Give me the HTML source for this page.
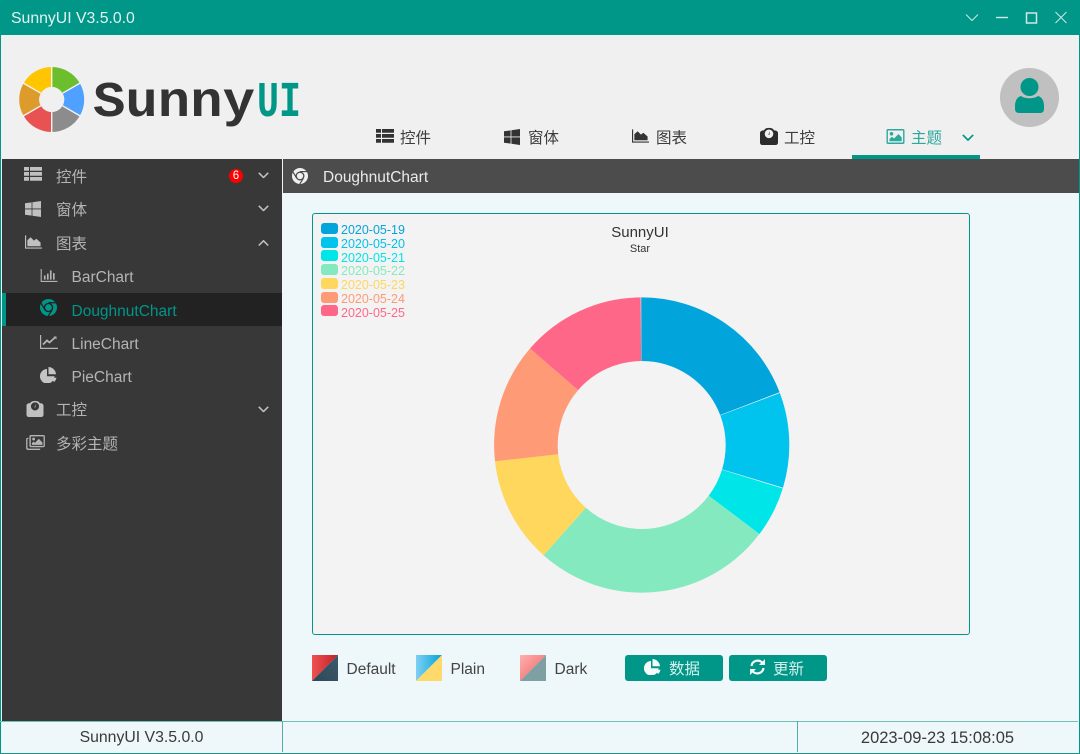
<!DOCTYPE html>
<html lang="zh"><head><meta charset="utf-8"><title>SunnyUI</title>
<style>
html,body{margin:0;padding:0}
body{width:1080px;height:754px;position:relative;overflow:hidden;background:#eef7f9;font-family:"Liberation Sans","Noto Sans CJK SC",sans-serif;color:#333}
.a{position:absolute}
.t{position:absolute;white-space:nowrap;line-height:20px;height:20px}
svg.i{position:absolute;overflow:visible}
.side{color:#b4b4b4;font-size:15.500px}
.tab{color:#3c3c3c;font-size:15.500px}
.leg{position:absolute;left:321px;width:17px;height:11px;border-radius:3px}
.lt{position:absolute;left:341px;font-size:12.500px;line-height:14px;white-space:nowrap}
.sw{position:absolute;top:655px;width:26px;height:26px}
.btn{position:absolute;top:655px;height:26px;width:98px;background:#009688;border-radius:3px}
</style></head><body>
<svg width="0" height="0" style="position:absolute">
<defs>
<symbol id="list" viewBox="0 0 18 14"><path d="M0 0h5v3.800H0zM0 5h5v3.800H0zM0 10h5v3.800H0zM6 0h12v3.800H6zM6 5h12v3.800H6zM6 10h12v3.800H6z"/></symbol>
<symbol id="win" viewBox="0 0 16 16"><path d="M0 2.300 6.600 1.400V7.500H0zM7.400 1.300 16 0V7.500H7.400zM0 8.400H6.600V14.600L0 13.700zM7.400 8.400H16V16L7.400 14.800z"/></symbol>
<symbol id="area" viewBox="0 0 18 14"><path d="M0 0h1.200v12.800H18V14H0z"/><path d="M2.500 11.500V5L6 2l3.500 3.500L12 3.500l4.500 4v4z"/></symbol>
<symbol id="scale" viewBox="0 0 18 18"><path fill-rule="evenodd" d="M3 3.500C4 3.500 4.500 2.500 5 2 6.500 .5 11.500 .5 13 2 13.500 2.500 14 3.500 15 3.500 16.500 3.500 18 4.500 18 6V15.500C18 17 17 18 15.500 18H2.500C1 18 0 17 0 15.500V6C0 4.500 1.500 3.500 3 3.500ZM9 2.500A4.300 4.300 0 1 0 9 11.100 4.300 4.300 0 1 0 9 2.500Z"/><path d="M9.800 4 9.400 8 8.400 7.800z"/></symbol>
<symbol id="img" viewBox="0 0 18 15"><path fill-rule="evenodd" d="M0 1.500C0 .6.600 0 1.500 0h15c.9 0 1.500.6 1.500 1.500v12c0 .9-.6 1.500-1.500 1.500h-15C.6 15 0 14.400 0 13.500zM1.400 1.500V13.500H16.600V1.500z"/><circle cx="5" cy="4.800" r="1.800"/><path d="M3 12.300V10L5.500 7.800 7.500 9.500 12 5 15.200 8.500V12.300z"/></symbol>
<symbol id="bar" viewBox="0 0 18 14"><path d="M0 0h1.200v12.800H18V14H0zM3.500 7h1.800v4.500H3.500zM6.800 5h1.800v6.500H6.800zM10 1.500h1.800v10H10zM13.300 4.500h1.800v7h-1.800z"/></symbol>
<symbol id="line" viewBox="0 0 18 14"><path d="M0 0h1.200v12.800H18V14H0z"/><path d="M3 9.500 7 5.500 9.500 7.500 15 2.500" fill="none" stroke="currentColor" stroke-width="1.800"/><path d="M13.500 1.500h3v3z"/></symbol>
<symbol id="pie" viewBox="0 0 17 16"><path d="M7 2V9.300H14.500A7.300 7.300 0 1 1 7 2Z"/><path d="M8.500 0A7.800 7.800 0 0 1 16 7.300H8.500Z"/><path d="M9.500 10.700H16.500A7.500 7.500 0 0 1 14.200 15Z"/></symbol>
<symbol id="chrome" viewBox="0 0 18 18"><circle cx="9" cy="9" r="9"/><circle cx="9" cy="9" r="4.300" stroke="var(--bg)" stroke-width="1.500"/><path d="M9 4H17.500M5.200 11.500 1 4.300M12.800 11.500 8.500 18.500" fill="none" stroke="var(--bg)" stroke-width="1.300"/></symbol>
<symbol id="imgs" viewBox="0 0 20 16"><path d="M0 4.500C0 3.500.6 3 1.500 3H2.500V4.300H1.400V13.500C1.400 14 1.700 14.500 2.500 14.500H15V16H2C.8 16 0 15 0 14z"/><path fill-rule="evenodd" d="M3.500 1.500C3.500.6 4.100 0 5 0H18.500C19.400 0 20 .6 20 1.500V11.500C20 12.400 19.400 13 18.500 13H5C4.100 13 3.500 12.400 3.500 11.500ZM5 1.400V11.600H18.600V1.400Z"/><circle cx="8" cy="4.300" r="1.500"/><path d="M6.200 10.500V8.500L8 7 9.500 8.200 13.500 4 17.400 8V10.500z"/></symbol>
<symbol id="chev" viewBox="0 0 14 8"><path d="M1 1 7 7 13 1" fill="none" stroke="currentColor" stroke-width="2"/></symbol>
<path id="sec" d="M0 -32.500A32.500 32.500 0 0 1 28.150 -16.250L10.900 -6.300A12.600 12.600 0 0 0 0 -12.600Z"/>
</defs></svg>

<!-- title bar -->
<div class="a" style="left:0;top:0;width:1080px;height:35px;background:#009688"></div>
<div class="t" style="left:11px;top:8.500px;color:#e3f3f1;font-size:15.800px">SunnyUI V3.5.0.0</div>
<svg class="i" style="left:960px;top:10px" width="115" height="16" fill="none" stroke="#cdeae6">
<path d="M6 4.500 12 10.500 18 4.500" stroke-width="1"/>
<path d="M36 7.500H48" stroke-width="1.400"/>
<rect x="66.500" y="3" width="10" height="10" stroke-width="1.500"/>
<path d="M95.500 2 106.500 13M106.500 2 95.500 13" stroke-width="1"/>
</svg>

<!-- header -->
<div class="a" style="left:1px;top:35px;width:1078px;height:124px;background:#f0f0f0"></div>
<div class="a" style="left:0;top:35px;width:1px;height:719px;background:#009688"></div>
<div class="a" style="left:1079px;top:35px;width:1px;height:719px;background:#009688"></div>

<!-- logo -->
<svg class="i" style="left:0;top:50px" width="310" height="90">
<use href="#sec" transform="translate(51.700 49.500)" fill="#6dbe2c"/>
<use href="#sec" transform="translate(51.700 49.500) rotate(60)" fill="#50a0ff"/>
<use href="#sec" transform="translate(51.700 49.500) rotate(120)" fill="#8c8c8c"/>
<use href="#sec" transform="translate(51.700 49.500) rotate(180)" fill="#e95252"/>
<use href="#sec" transform="translate(51.700 49.500) rotate(240)" fill="#dd9b2c"/>
<use href="#sec" transform="translate(51.700 49.500) rotate(300)" fill="#ffc500"/>
<path d="M51.700 16V37M51.700 62V83M80.700 32.750 62.600 43.200M40.800 55.800 22.700 66.250M80.700 66.250 62.600 55.800M40.800 43.200 22.700 32.750" stroke="#f4f4f4" stroke-width="1.400"/>
<text x="93" y="66" font-family="'Liberation Mono',monospace" font-weight="700" font-size="50" fill="#333" textLength="162" lengthAdjust="spacingAndGlyphs">Sunny</text>
<text x="257" y="66" font-family="'Liberation Mono',monospace" font-weight="700" font-size="50" fill="#009688" textLength="44" lengthAdjust="spacingAndGlyphs">UI</text>
</svg>

<!-- avatar -->
<svg class="i" style="left:1000px;top:68px" width="60" height="60">
<circle cx="29.500" cy="29.500" r="29.500" fill="#c0c0c0"/>
<circle cx="29.500" cy="19" r="9" fill="#009688"/>
<path d="M21 28C25 31 34 31 38 28 42 29 44 33 44 38V41C44 44 42 45 40 45H19C17 45 15 44 15 41V38C15 33 17 29 21 28Z" fill="#009688"/>
</svg>

<!-- tabs -->
<svg class="i" style="left:376px;top:129px" width="18" height="14" fill="#333"><use href="#list"/></svg>
<div class="t tab" style="left:400px;top:128.500px">控件</div>
<svg class="i" style="left:504px;top:129px" width="16" height="16" fill="#333"><use href="#win"/></svg>
<div class="t tab" style="left:528px;top:128.500px">窗体</div>
<svg class="i" style="left:632px;top:129px" width="17" height="14" fill="#333"><use href="#area"/></svg>
<div class="t tab" style="left:656px;top:128.500px">图表</div>
<svg class="i" style="left:760px;top:127px" width="18" height="18" fill="#2c2c2c"><use href="#scale"/></svg>
<div class="t tab" style="left:784px;top:128.500px">工控</div>
<svg class="i" style="left:886px;top:129px" width="19" height="15" fill="#2da89c"><use href="#img"/></svg>
<div class="t tab" style="left:911px;top:128.500px;color:#2da89c">主题</div>
<svg class="i" style="left:962px;top:134px;color:#009688" width="12" height="7"><use href="#chev"/></svg>
<div class="a" style="left:852px;top:155px;width:128px;height:4px;background:#009688"></div>

<!-- sidebar -->
<div class="a" style="left:2px;top:159px;width:280px;height:562px;background:#383838"></div>
<div class="a" style="left:2px;top:293px;width:280px;height:33px;background:#222"></div>
<div class="a" style="left:2px;top:293px;width:4px;height:33px;background:#009688"></div>

<svg class="i" style="left:24px;top:167px" width="18" height="14" fill="#c0c0c0"><use href="#list"/></svg>
<div class="t side" style="left:56px;top:168px">控件</div>
<div class="a" style="left:229px;top:169px;width:14px;height:14px;border-radius:50%;background:#f00;color:#fff;font-size:11.500px;line-height:14px;text-align:center">6</div>
<svg class="i" style="left:258px;top:172px;color:#c0c0c0" width="11" height="6.300"><use href="#chev"/></svg>

<svg class="i" style="left:25px;top:201px" width="16" height="16" fill="#c0c0c0"><use href="#win"/></svg>
<div class="t side" style="left:56px;top:201px">窗体</div>
<svg class="i" style="left:258px;top:205px;color:#c0c0c0" width="11" height="6.300"><use href="#chev"/></svg>

<svg class="i" style="left:25px;top:235px" width="17" height="14" fill="#c0c0c0"><use href="#area"/></svg>
<div class="t side" style="left:56px;top:235px">图表</div>
<svg class="i" style="left:258px;top:240px;color:#c0c0c0;transform:scaleY(-1)" width="11" height="6.300"><use href="#chev"/></svg>

<svg class="i" style="left:40px;top:269px" width="18" height="13" fill="#b4b4b4"><use href="#bar"/></svg>
<div class="t side" style="left:71.500px;top:268px">BarChart</div>

<svg class="i" style="left:40px;top:299px;--bg:#222" width="17" height="17" fill="#009688"><use href="#chrome"/></svg>
<div class="t side" style="left:71.500px;top:301.500px;color:#009688">DoughnutChart</div>

<svg class="i" style="left:40px;top:335px;color:#b4b4b4" width="18" height="14" fill="#b4b4b4"><use href="#line"/></svg>
<div class="t side" style="left:71.500px;top:335px">LineChart</div>

<svg class="i" style="left:40px;top:367px" width="17" height="16" fill="#c4c4c4"><use href="#pie"/></svg>
<div class="t side" style="left:71.500px;top:368px">PieChart</div>

<svg class="i" style="left:26px;top:400px" width="18" height="17" fill="#c0c0c0"><use href="#scale"/></svg>
<div class="t side" style="left:56px;top:401px">工控</div>
<svg class="i" style="left:258px;top:406px;color:#c0c0c0" width="11" height="6.300"><use href="#chev"/></svg>

<svg class="i" style="left:26px;top:435px" width="19" height="15" fill="#b4b4b4"><use href="#imgs"/></svg>
<div class="t side" style="left:56px;top:435px">多彩主题</div>

<!-- page header -->
<div class="a" style="left:283px;top:159px;width:796px;height:34px;background:#4c4c4c"></div>
<svg class="i" style="left:292px;top:168px;--bg:#4c4c4c" width="16" height="16" fill="#f0f0f0"><use href="#chrome"/></svg>
<div class="t" style="left:323px;top:168px;color:#eaeaea;font-size:15.500px">DoughnutChart</div>

<!-- chart panel -->
<div class="a" style="left:312px;top:213px;width:656px;height:420px;border:1px solid #009688;border-radius:3px;background:#f3f3f3"></div>
<div class="t" style="left:540px;width:200px;text-align:center;top:223px;font-size:15px;color:#333">SunnyUI</div>
<div class="t" style="left:540px;width:200px;text-align:center;top:239px;font-size:11px;color:#333">Star</div>

<div class="leg" style="top:223px;background:#02a4dc"></div><div class="lt" style="top:222.500px;color:#02a4dc">2020-05-19</div>
<div class="leg" style="top:237px;background:#00c3ee"></div><div class="lt" style="top:236.500px;color:#00c3ee">2020-05-20</div>
<div class="leg" style="top:250px;background:#00e5e8"></div><div class="lt" style="top:250.500px;color:#00e5e8">2020-05-21</div>
<div class="leg" style="top:264px;background:#85e9bf"></div><div class="lt" style="top:264px;color:#85e9bf">2020-05-22</div>
<div class="leg" style="top:278px;background:#ffd75c"></div><div class="lt" style="top:278px;color:#ffd75c">2020-05-23</div>
<div class="leg" style="top:292px;background:#ff9a76"></div><div class="lt" style="top:291.500px;color:#ff9a76">2020-05-24</div>
<div class="leg" style="top:305px;background:#ff6789"></div><div class="lt" style="top:305.500px;color:#ff6789">2020-05-25</div>

<svg class="i" style="left:480px;top:285px" width="320" height="320">
<g transform="rotate(-90 161.700 160)" fill="none" stroke-width="63.600">
<circle cx="161.700" cy="160" r="115.800" pathLength="360" stroke="#02a4dc" stroke-dasharray="69.100 290.900"/>
<circle cx="161.700" cy="160" r="115.800" pathLength="360" stroke="#00c3ee" stroke-dasharray="37.500 322.500" stroke-dashoffset="-69.400"/>
<circle cx="161.700" cy="160" r="115.800" pathLength="360" stroke="#00e5e8" stroke-dasharray="20 340" stroke-dashoffset="-107.200"/>
<circle cx="161.700" cy="160" r="115.800" pathLength="360" stroke="#85e9bf" stroke-dasharray="94.500 265.500" stroke-dashoffset="-127.300"/>
<circle cx="161.700" cy="160" r="115.800" pathLength="360" stroke="#ffd75c" stroke-dasharray="42 318" stroke-dashoffset="-221.800"/>
<circle cx="161.700" cy="160" r="115.800" pathLength="360" stroke="#ff9a76" stroke-dasharray="47.200 312.800" stroke-dashoffset="-263.800"/>
<circle cx="161.700" cy="160" r="115.800" pathLength="360" stroke="#ff6789" stroke-dasharray="48.800 311.200" stroke-dashoffset="-311"/>
</g>
</svg>

<!-- theme swatches -->
<svg class="sw" style="left:312px" viewBox="0 0 26 26"><defs><linearGradient id="g1a" x1="0" y1="0" x2="1" y2="0"><stop offset="0" stop-color="#ef5350"/><stop offset="1" stop-color="#c0202a"/></linearGradient><linearGradient id="g1b" x1="0" y1="1" x2="1" y2="0"><stop offset="0" stop-color="#2f4858"/><stop offset="1" stop-color="#3a5a6c"/></linearGradient></defs><path d="M0 0H26L0 26Z" fill="url(#g1a)"/><path d="M26 0V26H0Z" fill="url(#g1b)"/></svg>
<div class="t" style="left:346.500px;top:660px;font-size:15.500px;color:#444">Default</div>
<svg class="sw" style="left:416px" viewBox="0 0 26 26"><defs><linearGradient id="g2a" x1="0" y1="0" x2="1" y2="0"><stop offset="0" stop-color="#7ed0f2"/><stop offset="1" stop-color="#02a4dc"/></linearGradient></defs><path d="M0 0H26L0 26Z" fill="url(#g2a)"/><path d="M26 0V26H0Z" fill="#ffd96a"/></svg>
<div class="t" style="left:450.500px;top:660px;font-size:15.500px;color:#444">Plain</div>
<svg class="sw" style="left:520px" viewBox="0 0 26 26"><defs><linearGradient id="g3a" x1="0" y1="0" x2="1" y2="1"><stop offset="0" stop-color="#ffb0b0"/><stop offset="1" stop-color="#ee5f5f"/></linearGradient></defs><path d="M0 0H26L0 26Z" fill="url(#g3a)"/><path d="M26 0V26H0Z" fill="#7fa0a3"/></svg>
<div class="t" style="left:554.500px;top:660px;font-size:15.500px;color:#444">Dark</div>

<!-- buttons -->
<div class="btn" style="left:625px"></div>
<svg class="i" style="left:644px;top:659px" width="17" height="16" fill="#f4fbfa"><use href="#pie"/></svg>
<div class="t" style="left:669px;top:660px;font-size:15.500px;color:#d6efec">数据</div>
<div class="btn" style="left:729px"></div>
<svg class="i" style="left:749px;top:659px" width="17" height="16" viewBox="0 0 17 16" fill="none" stroke="#f4fbfa" stroke-width="2.200"><path d="M2.500 7A6.200 6.200 0 0 1 13.500 4"/><path d="M14.500 9A6.200 6.200 0 0 1 3.500 12"/><path d="M16 0V6H10Z" fill="#f4fbfa" stroke="none"/><path d="M1 16V10H7Z" fill="#f4fbfa" stroke="none"/></svg>
<div class="t" style="left:773px;top:660px;font-size:15.500px;color:#d6efec">更新</div>

<!-- status bar -->
<div class="a" style="left:0;top:721px;width:1078px;height:1px;background:#6fc0b7"></div>
<div class="a" style="left:282px;top:721px;width:1px;height:31px;background:#4fb0a6"></div>
<div class="a" style="left:797px;top:721px;width:1px;height:31px;background:#4fb0a6"></div>
<div class="a" style="left:0;top:752.500px;width:1080px;height:1.500px;background:#1c9284"></div>
<div class="t" style="left:0;width:283px;text-align:center;top:728px;font-size:15.800px;color:#3a3a3a">SunnyUI V3.5.0.0</div>
<div class="t" style="left:798px;width:279px;text-align:center;top:728px;font-size:16.500px;color:#3a3a3a">2023-09-23 15:08:05</div>
</body></html>
